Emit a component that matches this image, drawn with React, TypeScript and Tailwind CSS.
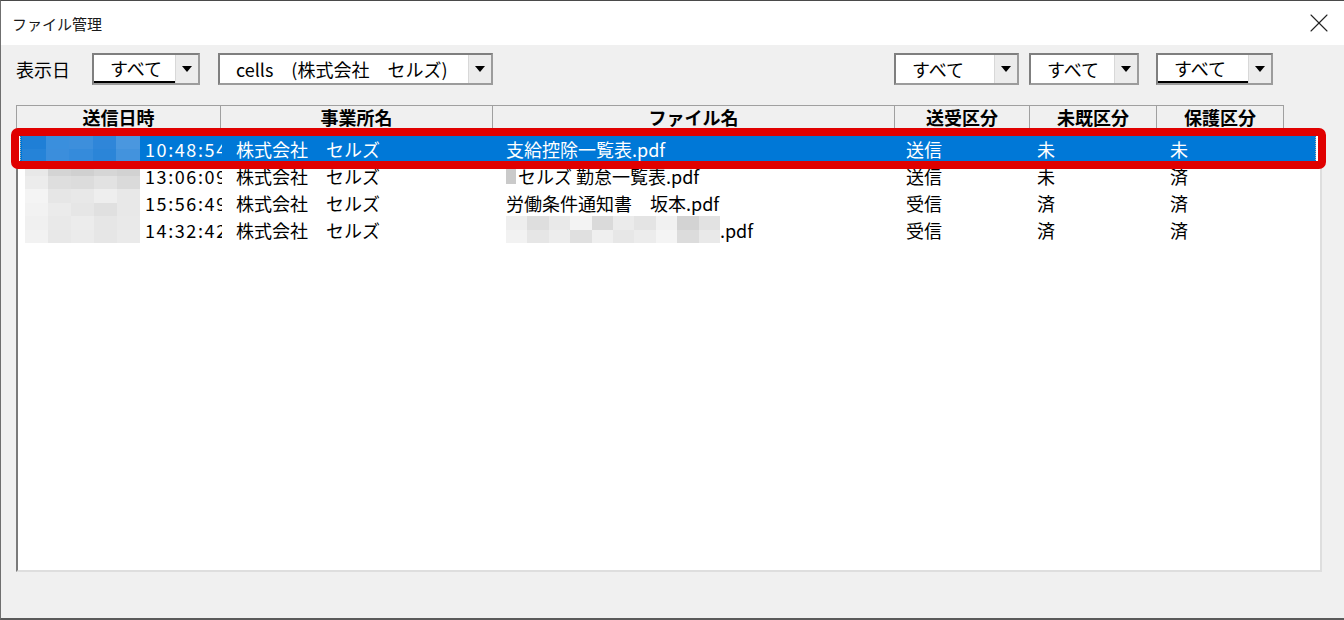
import { X } from 'lucide-react';

const jp = "font-['Noto_Sans_CJK_JP','Noto_Sans',sans-serif]";

interface Row {
  date: string[][];
  time: string;
  office: string;
  file: React.ReactNode;
  dir: string;
  read: string;
  prot: string;
  selected?: boolean;
}

// モザイク（ぼかし）部分
const Mosaic = ({ colors, w, h }: { colors: string[][]; w: number; h: number }) => (
  <div className="flex flex-col">
    {colors.map((line, i) => (
      <div key={i} className="flex">
        {line.map((c, j) => (
          <div key={j} style={{ width: w, height: h, backgroundColor: c }} />
        ))}
      </div>
    ))}
  </div>
);

const fileMosaic = [
  ['#eeeeee', '#dedede', '#e9e9e9', '#f3f3f3', '#dadada', '#ebebeb', '#e4e4e4', '#f1f1f1', '#d3d3d3', '#e2e2e2'],
  ['#f2f2f2', '#e6e6e6', '#ededed', '#e0e0e0', '#efefef', '#e7e7e7', '#ececec', '#f4f4f4', '#dcdcdc', '#e9e9e9'],
];

const rows: Row[] = [
  {
    date: [
      ['#1f7fd6', '#3a8fdd', '#3d8fdc', '#2f86d9', '#4a97df'],
      ['#2583d8', '#3b8edc', '#358bdb', '#2b85d8', '#4393dd'],
    ],
    time: '10:48:54',
    office: '株式会社　セルズ',
    file: '支給控除一覧表.pdf',
    dir: '送信',
    read: '未',
    prot: '未',
    selected: true,
  },
  {
    date: [
      ['#e8e8e8', '#d4d4d4', '#d0d0d0', '#d6d6d6', '#d2d2d2'],
      ['#ececec', '#dedede', '#dcdcdc', '#e2e2e2', '#dadada'],
    ],
    time: '13:06:09',
    office: '株式会社　セルズ',
    file: (
      <span className="flex items-center">
        <span className="mr-[2px] h-[16px] w-[10px] bg-[#cacaca]" />
        セルズ 勤怠一覧表.pdf
      </span>
    ),
    dir: '送信',
    read: '未',
    prot: '済',
  },
  {
    date: [
      ['#f4f4f4', '#e6e6e6', '#e8e8e8', '#eeeeee', '#e8e8e8'],
      ['#f2f2f2', '#ebebeb', '#e6e6e6', '#e0e0e0', '#e8e8e8'],
    ],
    time: '15:56:49',
    office: '株式会社　セルズ',
    file: '労働条件通知書　坂本.pdf',
    dir: '受信',
    read: '済',
    prot: '済',
  },
  {
    date: [
      ['#f0f0f0', '#e9e9e9', '#ececec', '#e6e6e6', '#e9e9e9'],
      ['#f2f2f2', '#e8e8e8', '#ebebeb', '#e6e6e6', '#eaeaea'],
    ],
    time: '14:32:42',
    office: '株式会社　セルズ',
    file: (
      <span className="flex items-center">
        <Mosaic colors={fileMosaic} w={21.4} h={13.5} />
        .pdf
      </span>
    ),
    dir: '受信',
    read: '済',
    prot: '済',
  },
];

const Combo = ({ label, width, underline }: { label: string; width: string; underline?: boolean }) => (
  <div
    className={`flex h-[32px] border-2 border-t-[#7f7f7f] border-l-[#7f7f7f] border-r-[#9c9c9c] border-b-[#9c9c9c] bg-white ${width}`}
  >
    <div
      className={`flex flex-1 items-center pl-[16px] text-[18px] leading-none text-black ${
        underline ? 'border-b-2 border-black' : ''
      }`}
    >
      {label}
    </div>
    <div className="flex w-[23px] items-center justify-center border-l border-[#d8d8d8] bg-[#ececec]">
      <div className="h-0 w-0 border-x-[5px] border-t-[6px] border-x-transparent border-t-black" />
    </div>
  </div>
);

const headers = [
  { label: '送信日時', w: 'w-[205px] border-l' },
  { label: '事業所名', w: 'w-[272px]' },
  { label: 'ファイル名', w: 'w-[402px]' },
  { label: '送受区分', w: 'w-[135px]' },
  { label: '未既区分', w: 'w-[127px]' },
  { label: '保護区分', w: 'w-[127px]' },
];

const App = () => {
  return (
    <div
      className={`relative flex h-[620px] w-[1344px] flex-col overflow-hidden border-l border-t border-b-2 border-l-[#6f6f6f] border-t-[#4a4a4a] border-b-[#5a5a5a] bg-[#f0f0f0] ${jp}`}
    >
      {/* タイトルバー */}
      <div className="flex h-[44px] shrink-0 items-center justify-between bg-white pl-[11px] pr-[9px]">
        <span className="text-[15px] leading-none text-[#1a1a1a]">ファイル管理</span>
        <X className="h-[32px] w-[32px] text-[#222]" strokeWidth={0.8} />
      </div>

      {/* 絞り込み */}
      <div className="mt-[8px] flex h-[32px] items-center pl-[15px] pr-[71px]">
        <span className="text-[18px] leading-none text-black">表示日</span>
        <div className="ml-[22px]">
          <Combo label="すべて" width="w-[108px]" underline />
        </div>
        <div className="ml-[18px]">
          <Combo label="cells　(株式会社　セルズ)" width="w-[275px]" />
        </div>
        <div className="ml-auto flex">
          <Combo label="すべて" width="w-[125px]" />
          <div className="ml-[10px]">
            <Combo label="すべて" width="w-[110px]" />
          </div>
          <div className="ml-[17px]">
            <Combo label="すべて" width="w-[117px]" underline />
          </div>
        </div>
      </div>

      {/* 見出し */}
      <div className="ml-[15px] mt-[20px] flex h-[24px]">
        {headers.map((h) => (
          <div
            key={h.label}
            className={`flex items-center justify-center border-y border-r border-[#a0a0a0] text-[18px] font-bold leading-none text-black ${h.w}`}
          >
            {h.label}
          </div>
        ))}
      </div>

      {/* 一覧 */}
      <div className="ml-[15px] h-[443px] w-[1306px] border-l-2 border-r-2 border-b-2 border-l-[#7a7a7a] border-r-[#dedede] border-b-[#dedede] bg-white pl-[2px] pt-[6px]">
        {rows.map((r, i) => (
          <div
            key={i}
            className={`flex h-[27px] w-[1296px] items-center text-[18px] leading-none ${
              r.selected
                ? 'bg-[#0078d7] text-white outline-1 -outline-offset-1 outline-dotted outline-[#b0b0b0]'
                : 'text-black'
            }`}
          >
            <div className="flex w-[202px] shrink-0 items-center overflow-hidden whitespace-nowrap">
              <div className={r.selected ? 'ml-[2px] mr-[5px]' : 'ml-[5px] mr-[5px]'}>
                <Mosaic colors={r.date} w={r.selected ? 23.6 : 23} h={13.5} />
              </div>
              <span className="tracking-[1.6px]">{r.time}</span>
            </div>
            <div className="w-[282px] shrink-0 pl-[14px]">{r.office}</div>
            <div className="w-[396px] shrink-0 pl-[2px]">{r.file}</div>
            <div className="w-[131px] shrink-0 pl-[6px]">{r.dir}</div>
            <div className="w-[133px] shrink-0 pl-[6px]">{r.read}</div>
            <div className="flex-1 pl-[6px]">{r.prot}</div>
          </div>
        ))}
      </div>

      {/* 注目枠 */}
      <div className="pointer-events-none absolute left-[10px] top-[127px] h-[41px] w-[1315px] rounded-[7px] border-[8px] border-[#e00000]" />
    </div>
  );
};

export default App;
